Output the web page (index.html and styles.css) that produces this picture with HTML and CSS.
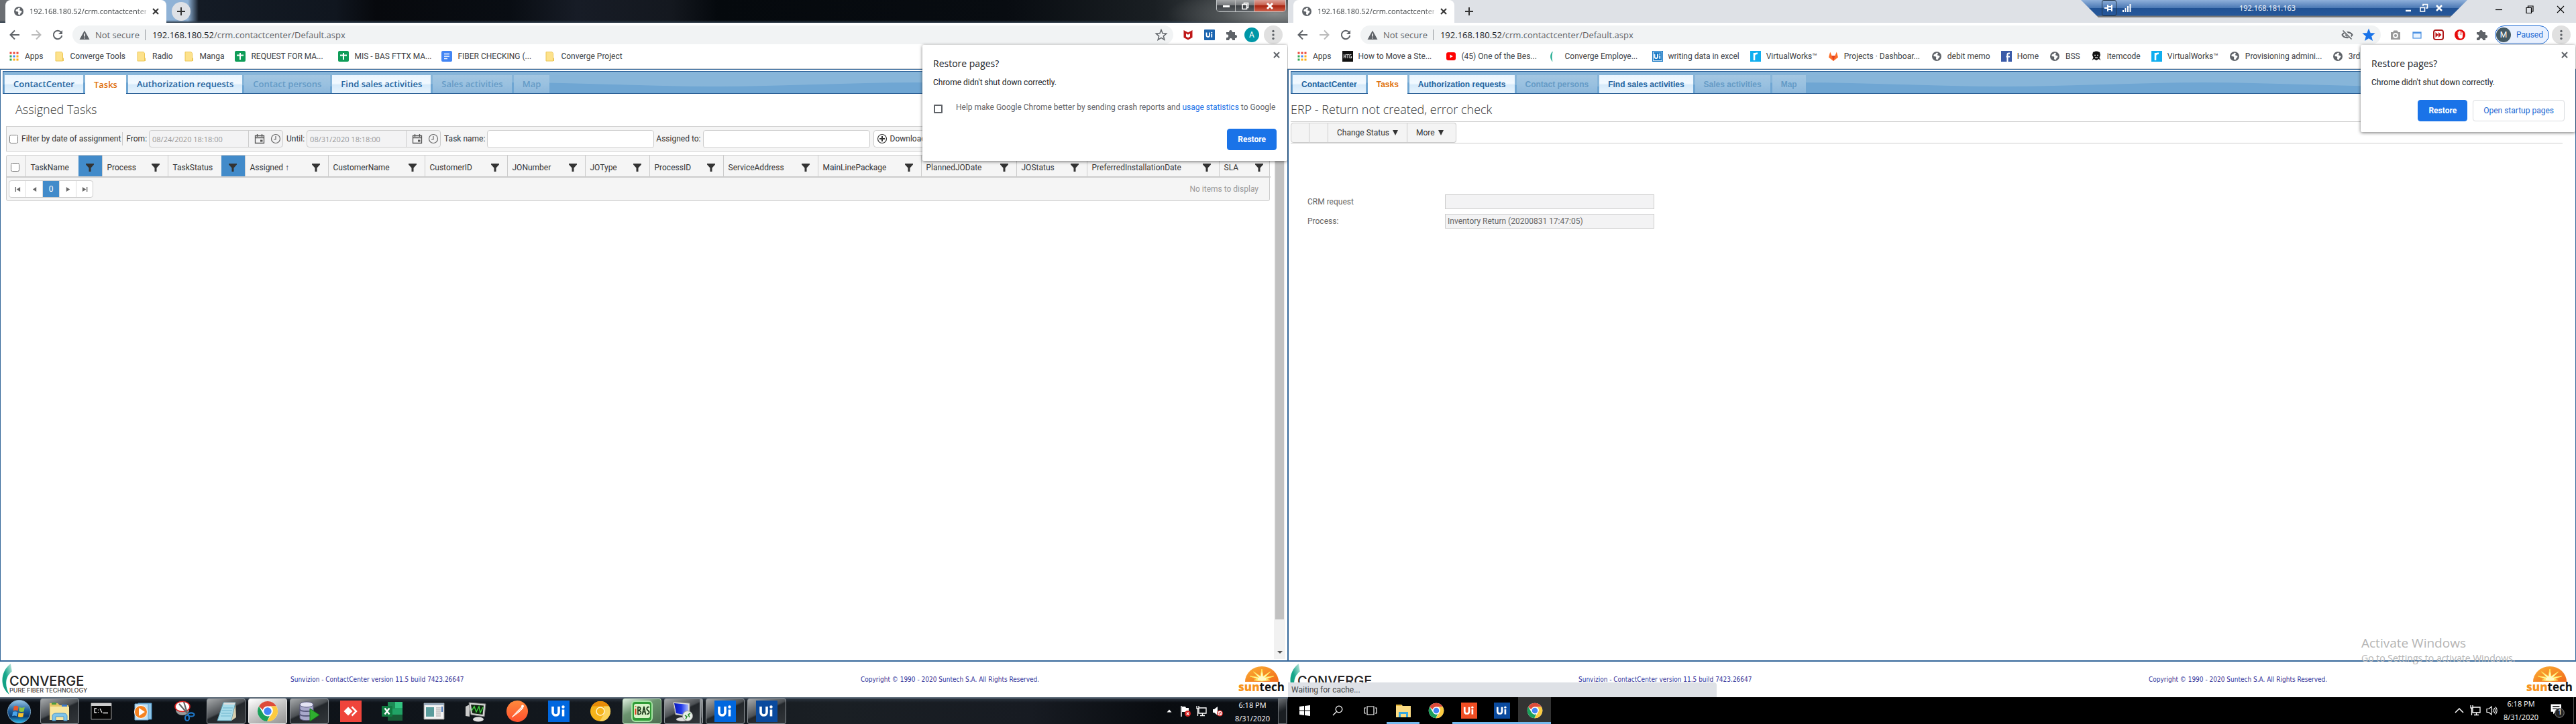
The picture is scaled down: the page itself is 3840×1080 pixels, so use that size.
FILE: index.html
```
<!DOCTYPE html>
<html lang="en">
<head>
<meta charset="utf-8">
<title>192.168.180.52/crm.contactcenter/Default.aspx</title>
<link rel="stylesheet" href="styles.css">
</head>
<body>
<svg class="sprite" aria-hidden="true">
  <defs>
    <linearGradient id="g-orb" x1="0" y1="0" x2="0" y2="1"><stop offset="0" stop-color="#9cc9e8"/><stop offset=".45" stop-color="#1f5f9c"/><stop offset=".7" stop-color="#0a3a70"/><stop offset="1" stop-color="#2fc0f0"/></linearGradient>
    <linearGradient id="g-sun" x1="0" y1="0" x2="1" y2="1"><stop offset="0" stop-color="#fbb034"/><stop offset="1" stop-color="#f26a1b"/></linearGradient>
    <linearGradient id="g-post" x1="0" y1="0" x2="0" y2="1"><stop offset="0" stop-color="#ff8a3c"/><stop offset="1" stop-color="#ff4f2e"/></linearGradient>
    <linearGradient id="g-leaf" x1="0" y1="1" x2="1" y2="0"><stop offset="0" stop-color="#0a9a7c"/><stop offset=".5" stop-color="#18a88c"/><stop offset="1" stop-color="#c4e8e0"/></linearGradient>
    <linearGradient id="g-screen" x1="0" y1="0" x2="1" y2="0"><stop offset="0" stop-color="#0a18b8"/><stop offset=".5" stop-color="#2038e8"/><stop offset="1" stop-color="#a8b8ff"/></linearGradient>
  </defs>
  <symbol id="globe" viewBox="0 0 16 16"><circle cx="8" cy="8" r="7" fill="#5f6368"/><path d="M8.5 2.5c-2 .3-1.500 2-3 2.200C4 5 3 6 3.500 7.500c.8 1.200 2.500.3 3.500 1.300.8 1-.2 1.700 0 2.700.2.800.8 1.300 1.200 2 2-.2 1.800-2 2.800-3 .8-1 1.500-1 1.500-2.200 0-1.500-2-1.300-3-1.800-1-.4-.6-1.300.2-1.800 1-.5.300-1.200-1.200-2.200z" fill="#fff"/></symbol>
  <symbol id="close" viewBox="0 0 16 16"><path d="M4 4l8 8M12 4l-8 8" stroke="currentColor" stroke-width="2" fill="none"/></symbol>
  <symbol id="plus" viewBox="0 0 16 16"><path d="M8 2v12M2 8h12" stroke="#333" stroke-width="2"/></symbol>
  <symbol id="back" viewBox="0 0 20 20"><path d="M17 10H4M10 3.500L3.500 10l6.500 6.500" fill="none" stroke="currentColor" stroke-width="2"/></symbol>
  <symbol id="fwd" viewBox="0 0 20 20"><path d="M3 10h13M10 3.500l6.500 6.500-6.500 6.500" fill="none" stroke="currentColor" stroke-width="2"/></symbol>
  <symbol id="reload" viewBox="0 0 20 20"><path d="M15 6a6.300 6.300 0 1 0 1.300 5" fill="none" stroke="#5f6368" stroke-width="2"/><path d="M17 3v6h-6z" fill="#5f6368"/></symbol>
  <symbol id="warn" viewBox="0 0 16 16"><path d="M8 1.500L15.500 15H.5z" fill="#5f6368"/><path d="M8 6v4.500M8 12v1.500" stroke="#fff" stroke-width="1.500"/></symbol>
  <symbol id="star" viewBox="0 0 20 20"><path d="M10 2.500l2.100 5.300 5.600.4-4.300 3.600 1.400 5.500L10 14.300l-4.800 3 1.400-5.500-4.300-3.600 5.600-.4z" stroke="currentColor" stroke-width="1.500"/></symbol>
  <symbol id="mcafee" viewBox="0 0 20 20"><path d="M3.500 3l6.500 3.500L16.500 3v11L10 17.500 3.500 14z" fill="#c01818"/><path d="M7 8l3 1.800L13 8v4.500l-3 1.800-3-1.800z" fill="#fff"/></symbol>
  <symbol id="ui" viewBox="0 0 32 32"><path d="M7 9v8.500c0 6 9 6 9 0V9" fill="none" stroke="#fff" stroke-width="3.600"/><path d="M22.500 13.500v10" stroke="#fff" stroke-width="3.600"/><circle cx="22.500" cy="9.500" r="2.200" fill="#fff"/></symbol>
  <symbol id="puzzle" viewBox="0 0 20 20"><path d="M3 6h4.200a2.400 2.400 0 1 1 4.600 0H16v4.200a2.400 2.400 0 1 1 0 4.600V18h-4a2.400 2.400 0 1 0-4.600 0H3v-4a2.400 2.400 0 1 0 0-4.500z" fill="#5f6368"/></symbol>
  <symbol id="dots" viewBox="0 0 28 28"><g fill="#5f6368"><circle cx="14" cy="8.500" r="1.700"/><circle cx="14" cy="14" r="1.700"/><circle cx="14" cy="19.500" r="1.700"/></g></symbol>
  <symbol id="apps" viewBox="0 0 16 16"><path d="M1.500 1.500h3v3h-3zM6.500 1.500h3v3h-3zM11.500 1.500h3v3h-3z" fill="#ea4335"/><path d="M1.500 6.500h3v3h-3zM1.500 11.500h3v3h-3z" fill="#34a853"/><path d="M6.500 6.500h3v3h-3z" fill="#4285f4"/><path d="M6.500 11.500h3v3h-3zM11.500 6.500h3v3h-3zM11.500 11.500h3v3h-3z" fill="#fbae17"/></symbol>
  <symbol id="folder" viewBox="0 0 16 16"><path d="M2 1.500h9l1.500 2v11.500H2z" fill="#fde28c" stroke="#ecc654"/><path d="M12.500 10.500H14V15h-1.500z" fill="#ecc654"/></symbol>
  <symbol id="sheets" viewBox="0 0 16 16"><rect width="16" height="16" rx="2" fill="#0f9d58"/><path d="M8 3v10M3 6.500h10" stroke="#fff" stroke-width="2"/></symbol>
  <symbol id="docs" viewBox="0 0 16 16"><rect width="16" height="16" rx="2" fill="#4285f4"/><path d="M4 4.500h8M4 8h8M4 11.500h5" stroke="#fff" stroke-width="1.500"/></symbol>
  <symbol id="htg" viewBox="0 0 16 16"><rect width="16" height="16" fill="#111"/><path d="M2.500 5v6M5 5v6M2.500 8H5M6 5.500h4M8 5.500V11M13.500 5.500H11v5h2.500V8" stroke="#ddd" stroke-width="1.200" fill="none"/></symbol>
  <symbol id="yt" viewBox="0 0 16 16"><rect x="1" y="2" width="14" height="12" rx="3" fill="#f00"/><path d="M6.500 5.500v5L11 8z" fill="#fff"/></symbol>
  <symbol id="leaf" viewBox="0 0 16 16"><path d="M5.500 1C1.500 5 1.500 11 5 15.500 3.500 10 4 5 5.500 1z" fill="#18a88c" stroke="#18a88c" stroke-width=".5"/></symbol>
  <symbol id="vw" viewBox="0 0 16 16"><rect width="16" height="16" fill="#10aeef"/><path d="M6 14V3M6 6.500C6.500 4.500 8.500 3.500 11 3.800" stroke="#fff" stroke-width="2.600" fill="none"/></symbol>
  <symbol id="gitlab" viewBox="0 0 16 16"><path d="M8 15L1 9.500 3.200 1.500 5.500 7h5l2.300-5.500L15 9.500z" fill="#fc6d26"/><path d="M8 15L5.500 7h5z" fill="#e24329"/></symbol>
  <symbol id="fb" viewBox="0 0 16 16"><rect width="16" height="16" fill="#3b5ba8"/><path d="M13 3.500h-1.500c-1.500 0-2 .8-2 2V16M7.500 8.500H13" stroke="#fff" stroke-width="2.200" fill="none"/></symbol>
  <symbol id="skull" viewBox="0 0 16 16"><path d="M3 2c3-2 7-2 10 0l1 4-1.500 4 2 4-3-2-3.500 2-3.500-2-3 2 2-4L2 6z" fill="#111"/><path d="M5 6.500h2M9 6.500h2M6 10h4" stroke="#ccc" stroke-width="1.300"/></symbol>
  <symbol id="eye" viewBox="0 0 20 20"><path d="M2.500 10C5.500 4.500 14.500 4.500 17.500 10 14.500 15.500 5.500 15.500 2.500 10z" fill="none" stroke="#5f6368" stroke-width="2"/><circle cx="10" cy="10" r="2.800" fill="#5f6368"/><path d="M4.500 3l12 13" stroke="#f1f3f4" stroke-width="4"/><path d="M3.500 3.500l13 13" stroke="#5f6368" stroke-width="1.600"/></symbol>
  <symbol id="camera" viewBox="0 0 20 20"><path d="M3 6h3l1.500-2.500h5L14 6h3v11H3z" fill="#9a9a9a"/><circle cx="10" cy="11" r="3" fill="none" stroke="#fff" stroke-width="1.800"/></symbol>
  <symbol id="win" viewBox="0 0 20 20"><rect x="4" y="6" width="12" height="9" fill="#e8f3ff" stroke="#4a90e2" stroke-width="1.200"/><path d="M4 7h12" stroke="#4a90e2" stroke-width="2"/></symbol>
  <symbol id="ff" viewBox="0 0 20 20"><rect x="3" y="3" width="14" height="14" rx="3" fill="#fff" stroke="#b01818" stroke-width="2"/><path d="M5.500 6v8l4.500-4zM10 6v8l4.500-4z" fill="#c01818"/></symbol>
  <symbol id="hand" viewBox="0 0 20 20"><circle cx="10" cy="10" r="8" fill="#e60a0a"/><path d="M7.500 11V6M9.500 10V4.500M11.500 10V5M13.300 11V7" stroke="#fff" stroke-width="1.500" stroke-linecap="round"/><path d="M6.800 10h7.200v3c0 3-4.500 3.500-6 1z" fill="#fff"/></symbol>
  <symbol id="min" viewBox="0 0 16 16"><path d="M3 8.500h10" stroke="currentColor" stroke-width="1.200"/></symbol>
  <symbol id="max" viewBox="0 0 16 16"><path d="M3 5.500h7.500v8H3zM5.500 5.500V3H13v8h-2.500" fill="none" stroke="currentColor" stroke-width="1.200"/></symbol>
  <symbol id="thinx" viewBox="0 0 16 16"><path d="M3 3l10 10M13 3L3 13" stroke="currentColor" stroke-width="1.100"/></symbol>
  <symbol id="pin" viewBox="0 0 16 16"><path d="M1 8h5M6 3v10M6 6h6M6 10h6M12 3v10" stroke="#fff" stroke-width="2" fill="none"/></symbol>
  <symbol id="signal" viewBox="0 0 16 16"><path d="M3 14v-3M6.500 14V8M10 14V5M13.500 14V2" stroke="#fff" stroke-width="2"/></symbol>
  <symbol id="cal" viewBox="0 0 16 16"><path d="M1.500 3.500h13v11h-13zM1.500 6.500h13M4.500 1v4M11.500 1v4" fill="none" stroke="#555" stroke-width="1.300"/><path d="M9 9.500h3.500v3H9z" fill="#555"/></symbol>
  <symbol id="clock" viewBox="0 0 16 16"><circle cx="8" cy="8" r="6.500" fill="none" stroke="#666" stroke-width="1.200"/><path d="M8 4v5H5" fill="none" stroke="#666" stroke-width="1.200"/></symbol>
  <symbol id="funnel" viewBox="0 0 14 14"><path d="M1 1h12v1.500L8.500 7.500V13h-3V7.500L1 2.500z" fill="#333"/></symbol>
  <symbol id="add" viewBox="0 0 16 16"><circle cx="8" cy="8" r="6.500" fill="none" stroke="#333" stroke-width="1.200"/><path d="M8 4v8M4 8h8" stroke="#333" stroke-width="2"/></symbol>
  <symbol id="pfirst" viewBox="0 0 10 10"><path d="M1.500 1v8" stroke="#666" stroke-width="1.500"/><path d="M9 1v8L3 5z" fill="#666"/></symbol>
  <symbol id="pprev" viewBox="0 0 10 10"><path d="M8 1v8L2 5z" fill="#666"/></symbol>
  <symbol id="chrome" viewBox="0 0 32 32"><circle cx="16" cy="16" r="15" fill="#fff"/><path d="M16 1a15 15 0 0 1 13 7.500H16a7.500 7.500 0 0 0-7.200 5.500L3 8.500A15 15 0 0 1 16 1z" fill="#dd4b39"/><path d="M29 8.500A15 15 0 0 1 15 31l7.300-11.500A7.500 7.500 0 0 0 20 8.500z" fill="#fccb40"/><path d="M3 8.500l6.500 11.300a7.500 7.500 0 0 0 9.500 3L15 31A15 15 0 0 1 3 8.500z" fill="#1aa05a"/><circle cx="16" cy="16" r="7.200" fill="#fff"/><circle cx="16" cy="16" r="5.700" fill="#4285f4"/></symbol>
  <symbol id="canary" viewBox="0 0 32 32"><circle cx="16" cy="16" r="15" fill="#f5b31a"/><path d="M3 8.500A15 15 0 0 1 29 8.500H16z" fill="#e88c08"/><path d="M29 8.500A15 15 0 0 1 15 31l7-12-1-10.500z" fill="#fbd35a"/><circle cx="16" cy="16" r="6" fill="#f5b31a" stroke="#fff3cf" stroke-width="1.500"/></symbol>
  <symbol id="orb" viewBox="0 0 38 38"><circle cx="19" cy="19" r="17.500" fill="url(#g-orb)" stroke="#7aa5c4"/><path d="M11 11c2.500-1.500 4.500-1 7 .5l-1 6.500c-2.500-1.500-4.500-1.500-7-.3z" fill="#e8582a"/><path d="M19.500 12c2.500 1.300 5 1.300 8 0l-1.200 6.700c-2.500 1.200-5 1-7.600-.3z" fill="#8cc63f"/><path d="M9.500 19.500c2.500-1.200 4.500-1 7 .3l-1.200 6.500c-2-1.500-4.500-1.500-7-.3z" fill="#4aa3e8"/><path d="M18.200 20.500c2.500 1.300 5 1.300 7.800.2L25 27c-2.700 1.200-5.300 1-7.800-.4z" fill="#fbc02d"/></symbol>
  <symbol id="explorer" viewBox="0 0 32 32"><path d="M1 4h12l3 3h13v22H1z" fill="#e5c564"/><path d="M4 3h7v3H4z" fill="#4c9a3c"/><path d="M19 6h8v3h-8z" fill="#3c78c8"/><path d="M2 9h28v20H2z" fill="#f7e6a0"/><path d="M5 30v-7c0-3 3-4 6-4h10c3 0 6 1 6 4v7h-5v-6H10v6z" fill="#7ec4ea" stroke="#4a94c4"/></symbol>
  <symbol id="cmd" viewBox="0 0 32 28"><path d="M1 2h30v24H1z" fill="#050505" stroke="#999"/><path d="M1 2h30v4H1z" fill="#ccc"/><path d="M9 10H6v6h3M11.500 11.500v1M11.500 15v1M14 10l3 6M18.500 16.500H26" stroke="#eee" stroke-width="1.300" fill="none"/></symbol>
  <symbol id="wmp" viewBox="0 0 32 32"><path d="M9 4h20v24H9z" fill="#8cc4e8" stroke="#4a8cbc"/><path d="M4 5h20v24H4z" fill="#bfe0f4" stroke="#6aa4cc"/><circle cx="13" cy="17" r="9.500" fill="#f58220" stroke="#fff"/><path d="M10 11v12l9-6z" fill="#fff"/></symbol>
  <symbol id="snip" viewBox="0 0 32 32"><ellipse cx="13" cy="14" rx="10" ry="8" fill="#999"/><ellipse cx="13" cy="9" rx="11" ry="7.500" fill="#fff" stroke="#e02020" stroke-width="1.600"/><path d="M8 5l14 16M15 2l6 20" stroke="#666" stroke-width="2.200"/><ellipse cx="20" cy="26" rx="3" ry="4" fill="none" stroke="#1e78c8" stroke-width="2.200"/><ellipse cx="26" cy="21" rx="4.500" ry="2.600" fill="none" stroke="#1e78c8" stroke-width="2.200"/></symbol>
  <symbol id="notepad" viewBox="0 0 32 32"><path d="M12 3h18l-6 27H3z" fill="#a8dcea" stroke="#5a9cb0"/><path d="M13 3h17l-1 3H12z" fill="#ddd"/><path d="M11 11h15M10 15h15M9 19h15M8 23h15" stroke="#6cb4cc"/><path d="M30 5l1 20-7 5z" fill="#d8d0b0"/></symbol>
  <symbol id="db" viewBox="0 0 32 32"><path d="M2 6v20c0 5 20 5 20 0V6z" fill="#a9a9cc" stroke="#58587c"/><ellipse cx="12" cy="6" rx="10" ry="4" fill="#e4e4f4" stroke="#58587c"/><path d="M2 13c0 4 20 4 20 0M2 20c0 4 20 4 20 0" fill="none" stroke="#58587c" stroke-width="2"/><path d="M17 12v19l14-9.500z" fill="#2fae2f" stroke="#167816"/></symbol>
  <symbol id="anydesk" viewBox="0 0 32 32"><rect width="32" height="32" fill="#ef443b"/><path d="M12 9.500l6.500 6.500-6.500 6.500L5.500 16z" fill="#fff"/><path d="M17.500 9.500L24 16l-6.500 6.500" fill="none" stroke="#fff" stroke-width="2.500"/></symbol>
  <symbol id="excel" viewBox="0 0 32 32"><path d="M9 2h22v28H9z" fill="#21a366"/><path d="M9 2h11v10H9z" fill="#1d8b55"/><path d="M20 2h11v9H20z" fill="#33c481"/><path d="M9 21h22v9H9z" fill="#185c37"/><rect x="0" y="8" width="16" height="16" rx="1" fill="#107c41"/><path d="M4.500 11.500l7 9M11.500 11.500l-7 9" stroke="#fff" stroke-width="2.400"/></symbol>
  <symbol id="panel" viewBox="0 0 32 28"><path d="M1 2h30v24H1z" fill="#f3f3f3" stroke="#888"/><path d="M1 2h30v3H1z" fill="#9ab"/><path d="M4 8h12v14H4z" fill="#5a9c9c"/><path d="M19 9h7M19 12h7M19 15h7M19 18h7M19 21h7" stroke="#999"/><path d="M27 7h2v8h-2z" fill="#4a78b8"/></symbol>
  <symbol id="monitor" viewBox="0 0 32 32"><path d="M1 9l6-3v18l-6-1z" fill="#ccc"/><path d="M6 3l25 2-2 19-20-3z" fill="#d6d6d6" stroke="#777"/><path d="M9 6l19 1.500-1.500 13.500L11 19z" fill="#102410"/><path d="M10 15l4-6 3 8 4-8 2 9 4-8" stroke="#3fd03f" stroke-width="1.500" fill="none"/><ellipse cx="20" cy="28" rx="8" ry="3.500" fill="#e0e0e0"/></symbol>
  <symbol id="postman" viewBox="0 0 32 32"><circle cx="16" cy="16" r="16" fill="url(#g-post)"/><path d="M8 25l9-10 6-6 2 2-6 6z" fill="#ffd8c8" stroke="#fff"/><circle cx="24" cy="8.500" r="2" fill="#fff"/></symbol>
  <symbol id="ibas" viewBox="0 0 32 32"><rect x="1" y="1" width="30" height="30" rx="5" fill="#2f9a35" stroke="#a6e4a4" stroke-width="2"/><rect x="4" y="5" width="24" height="21" rx="3" fill="#d8f4c8"/><path d="M6.500 12v9M6.500 8.500v1.500" stroke="#e03818" stroke-width="2"/><path d="M10 9v12M10 9.500c5 0 5 5 0 5.500 6 0 6 6 0 5.500M16.500 21l2.500-12 2.500 12M17.500 17h3M27 10c-4-1.500-5 3-2 5s1.500 6-2 5" stroke="#1a3818" stroke-width="1.700" fill="none"/></symbol>
  <symbol id="putty" viewBox="0 0 32 32"><path d="M2 2l25 2v20L6 21z" fill="#ddd" stroke="#888"/><path d="M4 4l21 2v16L7 19z" fill="url(#g-screen)"/><ellipse cx="16" cy="28" rx="9" ry="3" fill="#ddd"/><circle cx="24" cy="23" r="7.500" fill="#e8eee8" stroke="#999"/><path d="M20 22l3 2-2 4M28 19l-3 2 2 4" stroke="#2c8c2c" stroke-width="1.600" fill="none"/></symbol>
  <symbol id="winlogo" viewBox="0 0 16 16"><path d="M0 2l7-1v6.500H0zM8 1l8-1v7.500H8zM0 8.500h7V15l-7-1zM8 8.500h8V16l-8-1z" fill="#fff"/></symbol>
  <symbol id="search" viewBox="0 0 16 16"><circle cx="10" cy="6" r="4.800" fill="none" stroke="#fff" stroke-width="1.300"/><path d="M6.500 9.500L1 15" stroke="#fff" stroke-width="1.300"/></symbol>
  <symbol id="taskview" viewBox="0 0 20 16"><path d="M5 2h10v12H5zM3 4H1v8h2M17 4h2v8h-2" fill="none" stroke="#fff" stroke-width="1.200"/></symbol>
  <symbol id="exp10" viewBox="0 0 24 24"><path d="M1 3h8l2 2h12v17H1z" fill="#fcdc82"/><path d="M1 3h8v2H1z" fill="#e8b83c"/><path d="M5 22v-8h14v8h-3v-5H8v5z" fill="#38a8e0"/></symbol>
  <symbol id="flag" viewBox="0 0 18 18"><path d="M3 1v16" stroke="#fff" stroke-width="1.500"/><path d="M4 2h5l1 2h4v6H4z" fill="#fff"/><circle cx="12.500" cy="12.500" r="4.500" fill="#d81f1f"/><path d="M10.800 10.800l3.400 3.400M14.200 10.800l-3.400 3.400" stroke="#fff" stroke-width="1.400"/></symbol>
  <symbol id="net" viewBox="0 0 18 18"><path d="M5 4h11v8H5zM10.500 12v3M7 15.500h7M2 1v4h3V1M3.500 5v11" fill="none" stroke="#fff" stroke-width="1.300"/></symbol>
  <symbol id="mute" viewBox="0 0 18 18"><path d="M2 6h2l5-4v13l-5-4H2z" fill="#fff"/><circle cx="12.500" cy="12" r="4.500" fill="#d81f1f"/><circle cx="12.500" cy="12" r="2.600" fill="none" stroke="#fff" stroke-width="1.200"/><path d="M10.700 10.200l3.600 3.600" stroke="#fff" stroke-width="1.200"/></symbol>
  <symbol id="vol" viewBox="0 0 18 18"><path d="M2 6.500h3l4-3.500v12l-4-3.500H2zM11 6.500c1 1.500 1 3.500 0 5M13 5c2 2.500 2 5.500 0 8M15 3.500c2.800 3.300 2.800 7.700 0 11" fill="none" stroke="#fff" stroke-width="1.200"/></symbol>
  <symbol id="sun" viewBox="0 0 50 23"><path d="M0 23a25 23 0 0 1 50 0z" fill="url(#g-sun)"/><path d="M25 22L13 20.500l6-1.500-12-4.500 13.500 2L12.500 8l10.500 7L25 4l2 11 10.500-7-8 8.500 13.500-2-12 4.500 6 1.500z" fill="#fff8c8" stroke="#ffe95a"/></symbol>
  <symbol id="swoosh" viewBox="0 0 16 48"><path d="M14 0C-2 12-3 36 12 47 5 34 5 20 16 12z" fill="url(#g-leaf)"/></symbol>
</svg>

<main class="desk">

<section class="screen seven" aria-label="Left monitor">
  <header class="titlebar">
    <div class="tab"><svg class="i16"><use href="#globe"/></svg><span class="tab-title">192.168.180.52/crm.contactcenter</span><button class="bare" aria-label="Close tab"><svg class="i16"><use href="#close"/></svg></button></div>
    <button class="newtab" aria-label="New tab"><svg class="i16"><use href="#plus"/></svg></button>
    <div class="aero">
      <button aria-label="Minimize"><svg viewBox="0 0 12 12"><rect x="1" y="5" width="10" height="3" fill="#fff"/></svg></button>
      <button aria-label="Maximize"><svg viewBox="0 0 12 12"><path d="M4.500 3V1.500h6v7H9M2 3.500h6.500v7H2z" fill="none" stroke="#fff" stroke-width="1.600"/></svg></button>
      <button class="red" aria-label="Close"><svg viewBox="0 0 12 12"><path d="M2 2l8 8M10 2l-8 8" stroke="#fff" stroke-width="3"/></svg></button>
    </div>
  </header>
  <div class="toolbar">
    <button class="bare nav" aria-label="Back"><svg class="i20"><use href="#back"/></svg></button>
    <button class="bare nav off" aria-label="Forward"><svg class="i20"><use href="#fwd"/></svg></button>
    <button class="bare nav" aria-label="Reload"><svg class="i20"><use href="#reload"/></svg></button>
    <div class="omnibox"><svg class="i16"><use href="#warn"/></svg><span class="secure">Not secure</span><span class="url"><b>192.168.180.52</b>/crm.contactcenter/Default.aspx</span><svg class="i20 star"><use href="#star"/></svg></div>
    <div class="ext"><svg class="i20"><use href="#mcafee"/></svg><svg class="i20"><rect x="2" y="2" width="16" height="16" rx="1" fill="#1c65b0"/><use href="#ui" x="2" y="2" width="16" height="16"/></svg><svg class="i20"><use href="#puzzle"/></svg></div>
    <span class="avatar teal">A</span>
    <button class="bare menu" aria-label="Menu"><svg class="i28"><use href="#dots"/></svg></button>
  </div>
  <nav class="bookmarks">
    <a href="#"><svg class="i16"><use href="#apps"/></svg><span>Apps</span></a>
    <a href="#"><svg class="i16"><use href="#folder"/></svg><span>Converge Tools</span></a>
    <a href="#"><svg class="i16"><use href="#folder"/></svg><span>Radio</span></a>
    <a href="#"><svg class="i16"><use href="#folder"/></svg><span>Manga</span></a>
    <a href="#" class="cut"><svg class="i16"><use href="#sheets"/></svg><span>REQUEST FOR MA...</span></a>
    <a href="#" class="cut"><svg class="i16"><use href="#sheets"/></svg><span>MIS - BAS FTTX MA...</span></a>
    <a href="#" class="cut"><svg class="i16"><use href="#docs"/></svg><span>FIBER CHECKING (...</span></a>
    <a href="#"><svg class="i16"><use href="#folder"/></svg><span>Converge Project</span></a>
  </nav>

  <div class="page">
    <div class="tabs" role="tablist">
      <button role="tab">ContactCenter</button><button role="tab" class="on" aria-selected="true">Tasks</button><button role="tab">Authorization requests</button><button role="tab" disabled>Contact persons</button><button role="tab">Find sales activities</button><button role="tab" disabled>Sales activities</button><button role="tab" disabled>Map</button>
    </div>
    <div class="scroller">
      <div class="content">
        <h1>Assigned Tasks</h1>
        <form class="filters">
          <label class="bydate"><input type="checkbox">Filter by date of assignment</label>
          <label for="from">From:</label>
          <div class="date"><input id="from" type="text" value="08/24/2020 18:18:00" disabled><svg class="i16"><use href="#cal"/></svg><svg class="i16"><use href="#clock"/></svg></div>
          <label for="until">Until:</label>
          <div class="date"><input id="until" type="text" value="08/31/2020 18:18:00" disabled><svg class="i16"><use href="#cal"/></svg><svg class="i16"><use href="#clock"/></svg></div>
          <label for="tname">Task name:</label><input id="tname" class="field" type="text">
          <label for="ato">Assigned to:</label><input id="ato" class="field" type="text">
          <button type="button" class="download"><svg class="i16"><use href="#add"/></svg>Download</button>
        </form>
        <div class="grid">
          <table>
            <colgroup><col class="c28"><col class="c114"><col class="c98"><col class="c115"><col class="c124"><col class="c144"><col class="c123"><col class="c116"><col class="c96"><col class="c110"><col class="c141"><col class="c154"><col class="c142"><col class="c105"><col class="c197"><col class="c77"></colgroup>
            <thead><tr>
              <th><input type="checkbox" aria-label="Select all"></th>
              <th><div>TaskName<i class="hot"><svg><use href="#funnel"/></svg></i></div></th>
              <th><div>Process<i><svg><use href="#funnel"/></svg></i></div></th>
              <th><div>TaskStatus<i class="hot"><svg><use href="#funnel"/></svg></i></div></th>
              <th><div>Assigned ↑<i><svg><use href="#funnel"/></svg></i></div></th>
              <th><div>CustomerName<i><svg><use href="#funnel"/></svg></i></div></th>
              <th><div>CustomerID<i><svg><use href="#funnel"/></svg></i></div></th>
              <th><div>JONumber<i><svg><use href="#funnel"/></svg></i></div></th>
              <th><div>JOType<i><svg><use href="#funnel"/></svg></i></div></th>
              <th><div>ProcessID<i><svg><use href="#funnel"/></svg></i></div></th>
              <th><div>ServiceAddress<i><svg><use href="#funnel"/></svg></i></div></th>
              <th><div>MainLinePackage<i><svg><use href="#funnel"/></svg></i></div></th>
              <th><div>PlannedJODate<i><svg><use href="#funnel"/></svg></i></div></th>
              <th><div>JOStatus<i><svg><use href="#funnel"/></svg></i></div></th>
              <th><div>PreferredInstallationDate<i><svg><use href="#funnel"/></svg></i></div></th>
              <th><div>SLA<i><svg><use href="#funnel"/></svg></i></div></th>
            </tr></thead>
          </table>
          <div class="pager">
            <div class="pages"><button aria-label="First"><svg><use href="#pfirst"/></svg></button><button aria-label="Previous"><svg><use href="#pprev"/></svg></button><button class="now">0</button><button aria-label="Next"><svg class="flip"><use href="#pprev"/></svg></button><button aria-label="Last"><svg class="flip"><use href="#pfirst"/></svg></button></div>
            <span>No items to display</span>
          </div>
        </div>
      </div>
      <div class="scrollbar"><span class="thumb"></span><svg viewBox="0 0 10 6"><path d="M0 0h10L5 5z" fill="#505050"/></svg></div>
    </div>
  </div>
  <footer class="credits">
    <div class="converge"><svg><use href="#swoosh"/></svg><p>CONVERGE<small>PURE FIBER TECHNOLOGY</small></p></div>
    <p class="version">Sunvizion - ContactCenter version 11.5 build 7423.26647</p>
    <p class="copy">Copyright © 1990 - 2020 Suntech S.A. All Rights Reserved.</p>
    <div class="suntech"><svg><use href="#sun"/></svg><p><b>sun</b>tech</p></div>
  </footer>

  <aside class="popup wide">
    <button class="bare x" aria-label="Dismiss"><svg class="i16"><use href="#close"/></svg></button>
    <h2>Restore pages?</h2>
    <p>Chrome didn't shut down correctly.</p>
    <label class="help"><input type="checkbox"><span>Help make Google Chrome better by sending crash reports and <a href="#">usage statistics</a> to Google</span></label>
    <div class="acts"><button class="primary">Restore</button></div>
  </aside>

  <nav class="taskbar">
    <button class="start" aria-label="Start"><svg><use href="#orb"/></svg></button>
    <button class="open" aria-label="Explorer"><svg><use href="#explorer"/></svg></button>
    <button aria-label="Command prompt"><svg><use href="#cmd"/></svg></button>
    <button aria-label="Media Player"><svg><use href="#wmp"/></svg></button>
    <button aria-label="Snipping Tool"><svg><use href="#snip"/></svg></button>
    <button class="open" aria-label="Notepad"><svg><use href="#notepad"/></svg></button>
    <button class="open lit" aria-label="Chrome"><svg><use href="#chrome"/></svg></button>
    <button class="open" aria-label="Database"><svg><use href="#db"/></svg></button>
    <button aria-label="AnyDesk"><svg><use href="#anydesk"/></svg></button>
    <button aria-label="Excel"><svg><use href="#excel"/></svg></button>
    <button aria-label="Panel"><svg><use href="#panel"/></svg></button>
    <button aria-label="Monitor"><svg><use href="#monitor"/></svg></button>
    <button aria-label="Postman"><svg><use href="#postman"/></svg></button>
    <button aria-label="UiPath"><svg class="blue"><use href="#ui"/></svg></button>
    <button aria-label="Chrome Canary"><svg><use href="#canary"/></svg></button>
    <button class="open green" aria-label="iBAS"><svg><use href="#ibas"/></svg></button>
    <button class="open stack" aria-label="PuTTY"><svg><use href="#putty"/></svg></button>
    <button class="open" aria-label="UiPath Studio"><svg class="blue"><use href="#ui"/></svg></button>
    <button class="open" aria-label="UiPath Robot"><svg class="navy"><use href="#ui"/></svg></button>
    <div class="tray"><svg viewBox="0 0 18 18"><path d="M5.500 10.500L9 6.500l3.500 4z" fill="#fff"/></svg><svg><use href="#flag"/></svg><svg><use href="#net"/></svg><svg><use href="#mute"/></svg></div>
    <p class="time">6:18 PM<br>8/31/2020</p>
    <button class="peek" aria-label="Show desktop"></button>
  </nav>
</section>

<section class="screen ten" aria-label="Right monitor">
  <header class="titlebar">
    <div class="tab"><svg class="i16"><use href="#globe"/></svg><span class="tab-title">192.168.180.52/crm.contactcenter</span><button class="bare" aria-label="Close tab"><svg class="i16"><use href="#close"/></svg></button></div>
    <button class="newtab" aria-label="New tab"><svg class="i16"><use href="#plus"/></svg></button>
    <div class="flat"><button class="bare" aria-label="Minimize"><svg class="i16"><use href="#min"/></svg></button><button class="bare" aria-label="Restore"><svg class="i16"><use href="#max"/></svg></button><button class="bare" aria-label="Close"><svg class="i16"><use href="#thinx"/></svg></button></div>
    <div class="rdp"><span class="pin"><svg class="i16"><use href="#pin"/></svg></span><svg class="i16"><use href="#signal"/></svg><span class="host">192.168.181.163</span>
      <svg class="i16" viewBox="0 0 16 16"><path d="M4 12h8" stroke="#fff" stroke-width="2.500"/></svg><svg class="i16" viewBox="0 0 16 16"><path d="M3 7.500h6.500V13H3zM7 5V2.500h6.500V8H11" fill="none" stroke="#fff" stroke-width="1.600"/></svg><svg class="i16" viewBox="0 0 16 16"><path d="M4 4l8 8M12 4l-8 8" stroke="#fff" stroke-width="2.500"/></svg></div>
  </header>
  <div class="toolbar">
    <button class="bare nav" aria-label="Back"><svg class="i20"><use href="#back"/></svg></button>
    <button class="bare nav off" aria-label="Forward"><svg class="i20"><use href="#fwd"/></svg></button>
    <button class="bare nav" aria-label="Reload"><svg class="i20"><use href="#reload"/></svg></button>
    <div class="omnibox"><svg class="i16"><use href="#warn"/></svg><span class="secure">Not secure</span><span class="url"><b>192.168.180.52</b>/crm.contactcenter/Default.aspx</span><svg class="i20"><use href="#eye"/></svg><svg class="i20 star full"><use href="#star"/></svg></div>
    <div class="ext"><svg class="i20"><use href="#camera"/></svg><svg class="i20"><use href="#win"/></svg><svg class="i20"><use href="#ff"/></svg><svg class="i20"><use href="#hand"/></svg><svg class="i20"><use href="#puzzle"/></svg></div>
    <button class="profile"><span class="avatar slate">M</span>Paused</button>
    <button class="bare menu" aria-label="Menu"><svg class="i28"><use href="#dots"/></svg></button>
  </div>
  <nav class="bookmarks">
    <a href="#"><svg class="i16"><use href="#apps"/></svg><span>Apps</span></a>
    <a href="#" class="cut"><svg class="i16"><use href="#htg"/></svg><span>How to Move a Ste...</span></a>
    <a href="#" class="cut"><svg class="i16"><use href="#yt"/></svg><span>(45) One of the Bes...</span></a>
    <a href="#" class="cut"><svg class="i16"><use href="#leaf"/></svg><span>Converge Employe...</span></a>
    <a href="#"><svg class="i16"><rect x="1" y="1" width="14" height="14" fill="#1577c4" stroke="#1577c4" stroke-width="2"/><rect x="1.500" y="1.500" width="13" height="13" fill="none" stroke="#cfe4f6"/><use href="#ui" width="16" height="16"/></svg><span>writing data in excel</span></a>
    <a href="#"><svg class="i16"><use href="#vw"/></svg><span>VirtualWorks™</span></a>
    <a href="#" class="cut"><svg class="i16"><use href="#gitlab"/></svg><span>Projects · Dashboar...</span></a>
    <a href="#"><svg class="i16"><use href="#globe"/></svg><span>debit memo</span></a>
    <a href="#"><svg class="i16"><use href="#fb"/></svg><span>Home</span></a>
    <a href="#"><svg class="i16"><use href="#globe"/></svg><span>BSS</span></a>
    <a href="#"><svg class="i16"><use href="#skull"/></svg><span>itemcode</span></a>
    <a href="#"><svg class="i16"><use href="#vw"/></svg><span>VirtualWorks™</span></a>
    <a href="#" class="cut"><svg class="i16"><use href="#globe"/></svg><span>Provisioning admini...</span></a>
    <a href="#"><svg class="i16"><use href="#globe"/></svg><span>3rd</span></a>
  </nav>

  <div class="page">
    <div class="tabs" role="tablist">
      <button role="tab">ContactCenter</button><button role="tab" class="on" aria-selected="true">Tasks</button><button role="tab">Authorization requests</button><button role="tab" disabled>Contact persons</button><button role="tab">Find sales activities</button><button role="tab" disabled>Sales activities</button><button role="tab" disabled>Map</button>
    </div>
    <div class="detail">
      <h1>ERP - Return not created, error check</h1>
      <div class="strip"><button aria-label="Action"></button><button aria-label="Action"></button><button>Change Status<svg viewBox="0 0 8 8"><path d="M0 0h8L4 8z" fill="#333"/></svg></button><button>More<svg viewBox="0 0 8 8"><path d="M0 0h8L4 8z" fill="#333"/></svg></button></div>
      <form class="fields">
        <label for="crm">CRM request</label><input id="crm" type="text" readonly>
        <label for="proc">Process:</label><input id="proc" type="text" value="Inventory Return (20200831 17:47:05)" readonly>
      </form>
    </div>
  </div>
  <footer class="credits">
    <div class="converge"><svg><use href="#swoosh"/></svg><p>CONVERGE</p></div>
    <p class="version">Sunvizion - ContactCenter version 11.5 build 7423.26647</p>
    <p class="copy">Copyright © 1990 - 2020 Suntech S.A. All Rights Reserved.</p>
    <div class="suntech"><svg><use href="#sun"/></svg><p><b>sun</b>tech</p></div>
    <p class="status">Waiting for cache...</p>
    <div class="activate"><strong>Activate Windows</strong><span>Go to Settings to activate Windows.</span></div>
  </footer>

  <aside class="popup">
    <button class="bare x" aria-label="Dismiss"><svg class="i16"><use href="#close"/></svg></button>
    <h2>Restore pages?</h2>
    <p>Chrome didn't shut down correctly.</p>
    <div class="acts"><button class="primary">Restore</button><button>Open startup pages</button></div>
  </aside>

  <nav class="taskbar">
    <button aria-label="Start"><svg class="i16"><use href="#winlogo"/></svg></button>
    <button aria-label="Search"><svg class="i16"><use href="#search"/></svg></button>
    <button aria-label="Task view"><svg class="i20"><use href="#taskview"/></svg></button>
    <button class="run" aria-label="Explorer"><svg><use href="#exp10"/></svg></button>
    <button aria-label="Chrome"><svg><use href="#chrome"/></svg></button>
    <button class="run" aria-label="UiPath"><svg class="orange"><use href="#ui"/></svg></button>
    <button class="run" aria-label="UiPath Studio"><svg class="navy"><use href="#ui"/></svg></button>
    <button class="run cur" aria-label="Chrome"><svg><use href="#chrome"/></svg></button>
    <div class="tray"><svg viewBox="0 0 18 18"><path d="M3 12l6-6 6 6" fill="none" stroke="#fff" stroke-width="1.500"/></svg><svg><use href="#net"/></svg><svg><use href="#vol"/></svg></div>
    <p class="time">6:18 PM<br>8/31/2020</p>
    <button class="notes" aria-label="Notifications"><svg viewBox="0 0 28 28"><path d="M3 3h18v13H11l-4 4v-4H3z" fill="#fff"/><path d="M6 7h12M6 11h12" stroke="#000" stroke-width="1.500"/><circle cx="18" cy="18" r="8" fill="#222" stroke="#999"/></svg><span>1</span></button>
  </nav>
</section>
</main>
</body>
</html>
```
FILE: styles.css
```
* { box-sizing: border-box; }
body { margin: 0; font: 12px/16px Roboto, "Liberation Sans", sans-serif; color: #333; background: #fff; }
p, h1, h2 { margin: 0; }
button, input { font: inherit; color: inherit; }
button { border: 0; background: none; padding: 0; }
svg { display: block; flex: none; }
.sprite { position: absolute; width: 0; height: 0; }
.i16 { width: 16px; height: 16px; }
.i20 { width: 20px; height: 20px; }
.i28 { width: 28px; height: 28px; }
.bare { display: flex; color: #5f6368; }

.desk { display: grid; grid-template-columns: 1fr 1fr; min-height: 100vh; }
.screen { position: relative; display: flex; flex-direction: column; min-width: 0; overflow: hidden; }

/* title bar */
.titlebar { position: relative; display: flex; height: 34px; padding-left: 8px; background: #dee1e6; }
.seven .titlebar { background: radial-gradient(ellipse 160px 40px at 99% 60%, #85898a, #5a5e60aa 50%, transparent), linear-gradient(0deg, #2c3a48 0, transparent 4px), linear-gradient(90deg, #6c6f73 0 8px, #8fb2d6 240px 280px, #141b25 296px, #10161f 500px, #07090d 560px, #090d13 760px, #171c26 860px, #14181f 1000px, #05090d 1070px, #080c11 1500px, #1a1f23 1720px, #53585a 100%); }
.tab { display: flex; align-items: center; width: 240px; padding: 0 8px 0 12px; background: #fff; border-radius: 8px 8px 0 0; }
.tab-title { flex: 1; margin: 0 6px 0 8px; overflow: hidden; white-space: nowrap; font: 11px/16px "Open Sans", sans-serif; color: #3c4043; -webkit-mask-image: linear-gradient(90deg, #000 158px, transparent 182px); mask-image: linear-gradient(90deg, #000 158px, transparent 182px); }
.tab .bare { color: #333; }
.newtab { display: flex; align-items: center; justify-content: center; width: 28px; height: 28px; margin: 3px 0 0 8px; border-radius: 50%; }
.seven .newtab { background: #dee1e6; }
.aero { display: flex; align-self: flex-start; margin: 0 3px 0 auto; border: 1px solid #c4c8ca; border-top: 0; border-radius: 0 0 5px 5px; overflow: hidden; }
.aero button { display: flex; align-items: center; justify-content: center; width: 28px; height: 17px; border-right: 1px solid #bbb; background: linear-gradient(#a5a7a9, #777a7d 45%, #3c4044 50%, #5a5e62); }
.aero svg { width: 12px; height: 12px; }
.aero .red { width: 46px; border: 0; background: linear-gradient(#dca196, #c8604e 45%, #a82410 50%, #d0604a); }
.flat { display: flex; gap: 30px; margin: 6px 15px 0 auto; }
.flat .bare { height: 16px; color: #000; }
.rdp { position: absolute; top: 0; right: 162px; display: flex; align-items: center; width: 576px; height: 26px; padding: 0 34px 2px 31px; background: linear-gradient(#8fb0da, #4a78b4 12px, #215294 12px, #25579a 23px, #777 24px); clip-path: polygon(0 0, 100% 0, calc(100% - 26px) 100%, 26px 100%); color: #fff; font: 11px/16px "Open Sans", sans-serif; gap: 7px; }
.rdp .pin { display: flex; padding: 3px 2px; border: 1px solid #234; border-radius: 3px; }
.host { flex: 1; text-align: center; }

/* toolbar */
.toolbar { display: flex; align-items: center; height: 36px; padding: 0 8px 0 12px; background: #fff; }
.nav { margin-right: 12px; }
.nav.off { color: #bbb; }
.omnibox { flex: 1; display: flex; align-items: center; height: 28px; padding: 0 8px 0 10px; border-radius: 14px; background: #f1f3f4; font: 13px/20px "Open Sans", sans-serif; color: #5f6368; }
.omnibox .secure { margin: 0 10px 0 8px; padding-right: 8px; border-right: 1px solid #9a9da1; line-height: 16px; }
.omnibox .url { flex: 1; }
.omnibox b { font-weight: 400; color: #202124; }
.omnibox .i20 { margin-left: 12px; }
.star { color: #5f6368; fill: none; }
.star.full { color: #1a73e8; fill: #1a73e8; }
.ext { display: flex; gap: 12px; margin: 0 10px 0 12px; }
.avatar { display: grid; place-items: center; width: 22px; height: 22px; margin-right: 7px; border-radius: 50%; color: #fff; line-height: 22px; }
.teal { background: #0097a7; }
.slate { background: #455a64; }
.profile { display: flex; align-items: center; width: 81px; height: 28px; margin-right: 4px; padding-left: 1px; border: 1px solid #1967d2; border-radius: 14px; background: #e8f0fe; color: #1967d2; }
.profile .avatar { margin-right: 8px; }
.menu { border-radius: 50%; background: #e0e0e0; }

/* bookmarks */
.bookmarks { display: flex; align-items: center; gap: 16px; height: 33px; padding: 0 13px 5px; border-bottom: 1px solid #cdd0d4; background: #fff; overflow: hidden; }
.bookmarks a { flex: none; display: flex; align-items: center; gap: 8px; color: #3c4043; text-decoration: none; white-space: nowrap; }
.bookmarks .cut span { width: 114px; }

/* application frame */
.page { flex: 1; display: flex; flex-direction: column; padding: 2px 0 2px 3px; border: solid #336699; border-width: 1px 1px 2px; background: #fff; }
.tabs { display: flex; gap: 3px; height: 34px; padding: 5px 2px 0; border: solid #2b6096; border-width: 1px 0 1px 1px; background: url("data:image/svg+xml,%3Csvg xmlns='http://www.w3.org/2000/svg' width='600' height='34'%3E%3Cpath d='M0 16C100 16 200 22 300 22S500 16 600 16V34H0z' fill='%236fa6d3'/%3E%3C/svg%3E") 160px 0, #87b5d9; }
.tabs button { padding: 0 13px; background: linear-gradient(#eaf5fe, #f2f9ff 45%, #d6eafa 55%, #e6f3fd); color: #25659f; font: 600 13px/27px "Open Sans", sans-serif; }
.tabs .on { margin-bottom: -1px; background: #fff; color: #e0720f; }
.tabs button:disabled { background: linear-gradient(#a3c6e1, #9ac1e0 50%, #8db8dc); color: #659bc6; }
.ten .tabs button { font: bold 12px/24px "Liberation Sans", sans-serif; }
h1 { font: 300 18px/24px "Open Sans", sans-serif; color: #333; }
.scroller { flex: 1; display: flex; padding-right: 3px; }
.content { flex: 1; min-width: 0; padding: 11px 6px 0 5px; }
.content h1 { padding-left: 14px; }

/* filters */
.filters { display: flex; align-items: center; gap: 3px; height: 38px; margin-top: 13px; padding: 0 4px; border: 1px solid #ccc; background: #f5f5f5; white-space: nowrap; overflow: hidden; }
.bydate { display: flex; align-items: center; gap: 5px; height: 20px; padding-right: 2px; margin-right: 2px; border-right: 1px solid #ccc; }
input[type="checkbox"] { width: 13px; height: 13px; margin: 0; }
.date { display: flex; align-items: center; gap: 8px; width: 200px; height: 26px; padding-right: 2px; border: 1px solid #ccc; border-radius: 4px; background: #f3f3f4; }
.date + label { margin-left: 2px; }
.date input { flex: 1; min-width: 0; height: 24px; padding: 0 4px; border: 0; border-right: 1px solid #ccc; background: none; color: #999; font: 11px/16px "Open Sans", sans-serif; }
.field { width: 249px; height: 27px; border: 1px solid #ccc; border-radius: 4px; background: #fff; }
.download { display: flex; align-items: center; gap: 4px; height: 26px; margin-left: 2px; padding: 0 4px; border: 1px solid #ccc; border-radius: 4px; background: #fff; }

/* task grid */
.grid { margin-top: 5px; border: 1px solid #ccc; border-radius: 3px; background: #f5f5f5; }
table { width: 100%; table-layout: fixed; border-collapse: collapse; }
th { padding: 0; border-left: 1px solid #ccc; border-bottom: 2px solid #ccc; font-weight: 400; text-align: left; white-space: nowrap; }
th:first-child { border-left: 0; padding: 4px 0 0 6px; }
th input { display: block; }
th div { display: flex; align-items: stretch; justify-content: space-between; height: 31px; padding-left: 7px; line-height: 36px; }
th i { display: grid; place-items: center; width: 35px; padding-top: 5px; }
th i svg { width: 14px; height: 14px; }
.hot { background: #428bca; }
.c28 { width: 28px; } .c77 { width: 77px; } .c96 { width: 96px; } .c98 { width: 98px; } .c105 { width: 105px; } .c110 { width: 110px; }
.c114 { width: 114px; } .c115 { width: 115px; } .c116 { width: 116px; } .c123 { width: 123px; } .c124 { width: 124px; }
.c141 { width: 141px; } .c142 { width: 142px; } .c144 { width: 144px; } .c154 { width: 154px; } .c197 { width: 197px; }
.pager { display: flex; align-items: center; justify-content: space-between; height: 34px; padding: 0 16px 0 3px; color: #999; }
.pages { display: flex; border: 1px solid #ccc; border-radius: 4px; background: #fff; overflow: hidden; }
.pages button { display: grid; place-items: center; width: 25px; height: 24px; border-left: 1px solid #ddd; }
.pages button:first-child { width: 24px; border: 0; }
.pages svg { width: 9px; height: 9px; }
.pages .now { background: #428bca; color: #fff; }
.flip { transform: rotate(180deg); }
.scrollbar { display: flex; flex-direction: column; align-items: center; width: 17px; padding: 17px 0 7px; background: #f1f1f1; }
.thumb { flex: 1; width: 13px; margin-bottom: 47px; background: #c1c1c1; }
.scrollbar svg { width: 8px; height: 5px; }

/* task detail */
.detail { padding: 11px 19px 0 0; }
.detail h1 { padding-bottom: 6px; border-bottom: 1px solid #ccc; }
.strip { display: flex; padding-top: 1px; border-bottom: 1px solid #ccc; }
.strip button { display: flex; align-items: center; gap: 5px; height: 30px; padding: 0 13px; border: 1px solid #ccc; border-left: 0; background: #f4f4f4; white-space: nowrap; }
.strip button:nth-child(-n+2) { width: 28px; padding: 0; }
.strip button:first-child { border-left: 1px solid #ccc; border-radius: 4px 0 0 4px; }
.strip button:last-child { padding-right: 18px; border-radius: 0 4px 4px 0; }
.strip svg { width: 8px; height: 8px; }
.fields { display: grid; grid-template-columns: 205px 312px; row-gap: 7px; align-items: center; padding: 76px 0 0 25px; color: #666; }
.fields input { height: 22px; padding: 0 3px; border: 1px solid #ccc; background: #f3f3f4; color: #666; }

/* page footer */
.credits { position: relative; display: grid; grid-template-columns: 433px 850px 1fr auto; align-items: center; height: 53px; padding-right: 4px; background: #fff; color: #333399; font: 10px/14px "DejaVu Sans Condensed", "DejaVu Sans", sans-serif; }
.converge { display: flex; height: 47px; padding-left: 2px; color: #222; }
.converge svg { width: 16px; height: 47px; margin-right: -4px; }
.converge p { padding-top: 17px; font: 500 20px/18px Inter, sans-serif; }
.converge small { display: block; font: 500 9px/9px Inter, sans-serif; color: #444; }
.suntech { width: 71px; }
.suntech svg { width: 50px; height: 23px; margin: 0 auto; }
.suntech p { font: 700 17px/16px "Open Sans", sans-serif; color: #111; text-align: center; }
.suntech b { color: #f7941d; }
.status { position: absolute; left: 0; bottom: 0; width: 639px; height: 22px; padding-left: 5px; border-radius: 0 4px 0 0; background: #dee1e6; color: #444; font: 12px/23px Roboto, sans-serif; }
.activate { position: absolute; right: 83px; bottom: 49px; display: flex; flex-direction: column; width: 237px; color: #b4b4b4; font: 14px/18px "Open Sans", sans-serif; white-space: nowrap; }
.activate strong { font: 400 19px/28px "Open Sans", sans-serif; }

/* restore bubble */
.popup { position: absolute; top: 67px; right: 1px; width: 320px; padding: 16px; border-radius: 2px; background: #fff; box-shadow: 0 1px 5px rgba(0, 0, 0, .55); color: #202124; }
.popup.wide { width: 544px; }
.popup h2 { font: 400 14px/24px "Open Sans", sans-serif; }
.popup p { margin-top: 8px; }
.x { position: absolute; top: 7px; right: 8px; }
.help { display: flex; align-items: flex-start; gap: 20px; margin-top: 21px; color: #5f6368; white-space: nowrap; }
.help input { width: 13px; margin: 4px 0 0 1px; appearance: none; border: 2px solid #5f6368; border-radius: 1px; }
.help a { color: #1a73e8; text-decoration: none; }
.acts { display: flex; justify-content: flex-end; gap: 8px; margin-top: 18px; }
.wide .acts { margin-top: 23px; }
.acts button { height: 32px; padding: 0 15px; border: 1px solid #dadce0; border-radius: 4px; color: #1967d2; }
.acts .primary { border-color: #1a73e8; background: #1a73e8; color: #fff; font-weight: 700; }

/* taskbars */
.taskbar { display: flex; height: 40px; color: #fff; }
.taskbar button { display: flex; align-items: center; justify-content: center; }
.blue { background: #0067df; }
.navy { background: #0a4a9e; }
.orange { background: #f04e23; }
.time { width: 60px; text-align: center; font: 11px/20px "Open Sans", sans-serif; white-space: nowrap; }
.tray { display: flex; align-items: center; gap: 6px; margin-left: auto; }
.tray svg { width: 18px; height: 18px; }

.seven .taskbar { gap: 4px; border-top: 2px solid #5c6a78; background: linear-gradient(#2a333f, transparent 6px), linear-gradient(90deg, #0b0f14, #10151b 35%, #1a1f24 65%, #171b22 80%, #090c10 90%, #0b0f14); }
.seven .taskbar button { width: 58px; }
.seven .taskbar button svg { width: 32px; height: 32px; }
.seven .taskbar .start { width: 56px; }
.seven .taskbar .start svg { width: 37px; height: 37px; }
.seven .taskbar .open { border: 1px solid #8d9297; border-radius: 3px; background: linear-gradient(155deg, #a5a8aa, #4c5054 45%, #23272b 50%, #32363a); }
.seven .taskbar .lit { background: linear-gradient(155deg, #fff, #c3c3c3 50%, #929292); border-color: #e8e8e8; }
.seven .taskbar .green { background: linear-gradient(155deg, #dcecdc, #6c9470 40%, #4c6c50); border-color: #c4e4c4; }
.seven .taskbar .stack { border-right: 5px double #8d9297; }
.seven .time { margin-left: 9px; }
.seven .taskbar .peek { width: 13px; margin: 0 2px 0 4px; border: 1px solid #6c7074; background: linear-gradient(155deg, #6a6e72, #1a1e22 50%); }

.ten .taskbar { background: #000; }
.ten .taskbar > button { width: 49px; }
.ten .taskbar button svg:not(.i16):not(.i20) { width: 24px; height: 24px; }
.ten .run { border-bottom: 3px solid #76b9ed; padding-top: 3px; background-clip: padding-box; }
.ten .cur { background: #333; }
.ten .tray { gap: 6px; }
.ten .time { margin-left: 5px; }
.ten .taskbar .notes { position: relative; margin-right: 3px; border-right: 1px solid #555; }
.ten .taskbar .notes svg:not(.i16) { width: 28px; height: 28px; }
.notes span { position: absolute; left: 25px; top: 15px; font-size: 11px; }
```
